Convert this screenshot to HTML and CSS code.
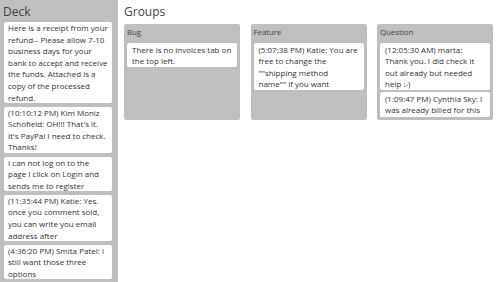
FILE: index.html
```html
<!DOCTYPE html>
<html>
<head>
<meta charset="utf-8">
<link rel="stylesheet" href="styles.css">
</head>
<body>
<div class="app">
  <aside class="deck">
    <h2 class="title">Deck</h2>
    <div class="deck-list">
      <div class="card">Here is a receipt from your refund-- Please allow 7-10 business days for your bank to accept and receive the funds. Attached is a copy of the processed refund.</div>
      <div class="card">(10:10:12 PM) Kim Moniz Schofield: OH!!! That's it. It's PayPal I need to check. Thanks!</div>
      <div class="card">I can not log on to the page I click on Login and sends me to register</div>
      <div class="card">(11:35:44 PM) Katie: Yes. once you comment sold, you can write you email address after</div>
      <div class="card">(4:36:20 PM) Smita Patel: i still want those three options</div>
    </div>
  </aside>
  <main class="groups">
    <h2 class="title">Groups</h2>
    <div class="group-grid">
      <section class="group">
        <div class="group-head">Bug</div>
        <div class="group-list">
          <div class="card">There is no invoices tab on the top left.</div>
        </div>
      </section>
      <section class="group">
        <div class="group-head">Feature</div>
        <div class="group-list">
          <div class="card">(5:07:38 PM) Katie: You are free to change the ""shipping method<br>name"" if you want</div>
        </div>
      </section>
      <section class="group">
        <div class="group-head">Question</div>
        <div class="group-list">
          <div class="card">(12:05:30 AM) marta: Thank you. I did check it out already but needed help :-)</div>
          <div class="card">(1:09:47 PM) Cynthia Sky: I was already billed for this</div>
        </div>
      </section>
    </div>
  </main>
</div>
</body>
</html>
```

FILE: styles.css
```css
html, body {
  margin: 0;
  padding: 0;
  background: #ffffff;
}
body {
  font-family: "Open Sans", "Noto Sans", sans-serif;
  color: #333333;
  width: 499px;
  height: 282px;
  overflow: hidden;
}
.app {
  display: flex;
  gap: 6px;
  height: 282px;
}
.deck {
  width: 118px;
  flex: none;
  background: #bfbfbf;
  padding: 0 6px 0 4px;
  box-sizing: border-box;
  height: 282px;
  overflow: hidden;
}
.title {
  margin: 4px 0 2px 0;
  font-size: 12px;
  line-height: 16px;
  font-weight: 400;
  color: #444444;
}
.deck .title {
  margin-left: -1px;
}
.deck-list {
  display: flex;
  flex-direction: column;
  gap: 3.5px;
}
.card {
  background: #ffffff;
  border-radius: 2px;
  font-size: 8px;
  line-height: 11.6px;
  padding: 0 3.5px 0 4px;
  color: #333333;
}
.groups {
  flex: 1;
}
.groups .title {
  margin-bottom: 4px;
}
.group-grid {
  display: grid;
  grid-template-columns: 116px 116px 116px;
  column-gap: 10.5px;
}
.group {
  background: #bfbfbf;
  height: 96px;
  border-radius: 2px;
  padding: 0 3px;
  box-sizing: border-box;
}
.group-head {
  font-size: 7.8px;
  line-height: 11.5px;
  padding: 3px 0 4.5px 0;
  color: #444444;
}
.group-list {
  display: flex;
  flex-direction: column;
  gap: 2px;
}
.group .card {
  padding: 0.5px 5px 0.5px 5px;
}
```
